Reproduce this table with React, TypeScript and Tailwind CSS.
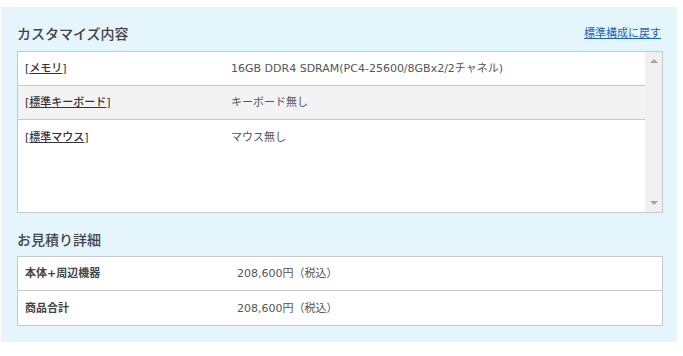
const font = {
  fontFamily: '"DejaVu Sans", "Noto Sans CJK JP", sans-serif',
};

const customItems = [
  { label: "メモリ", value: "16GB DDR4 SDRAM(PC4-25600/8GBx2/2チャネル)" },
  { label: "標準キーボード", value: "キーボード無し" },
  { label: "標準マウス", value: "マウス無し" },
];

const estimateRows = [
  { label: "本体+周辺機器", value: "208,600円（税込）" },
  { label: "商品合計", value: "208,600円（税込）" },
];

function ScrollTrack() {
  return (
    <div className="flex w-[17px] shrink-0 flex-col items-center justify-between bg-[#f0f0f0] py-[7px]">
      <span className="h-0 w-0 border-x-[4px] border-b-[4px] border-x-transparent border-b-[#a3a3a3]" />
      <span className="h-0 w-0 border-x-[4px] border-t-[4px] border-x-transparent border-t-[#a3a3a3]" />
    </div>
  );
}

export default function App() {
  return (
    <div className="h-[356px] w-[683px] bg-white pl-[1px] pt-[7px]" style={font}>
      <div className="w-[676px] bg-[#e5f5fc] pb-4 pl-4">
        {/* customize section */}
        <div className="flex h-[44px] w-[646px] items-center justify-between pt-[10px]">
          <h2 className="text-[14px] font-medium text-[#444]">カスタマイズ内容</h2>
          <a className="pr-[2px] text-[11px] text-[#1a64b4] underline" href="#">
            標準構成に戻す
          </a>
        </div>
        <div className="flex h-[162px] w-[646px] border border-[#c8c8c8] bg-white">
          <div className="flex-1">
            {customItems.map((item, idx) => (
              <div
                key={item.label}
                className={
                  "flex h-[34px] items-center pt-[2px] text-[11px] " +
                  (idx < customItems.length - 1 ? "border-b border-[#c8c8c8] " : "") +
                  (idx === 1 ? "bg-[#f3f3f3]" : "bg-white")
                }
              >
                <div className="w-[213px] pl-[7px] font-medium text-[#333]">
                  [<span className="underline">{item.label}</span>]
                </div>
                <div className="text-[#555]">{item.value}</div>
              </div>
            ))}
          </div>
          <ScrollTrack />
        </div>

        {/* estimate section */}
        <div className="flex h-[43px] items-center pt-[12px]">
          <h2 className="text-[14px] font-medium text-[#444]">お見積り詳細</h2>
        </div>
        <div className="w-[646px] border border-[#c8c8c8] bg-white">
          {estimateRows.map((row, idx) => (
            <div
              key={row.label}
              className={
                "flex h-[34px] items-center pt-[2px] text-[11px] " +
                (idx === 0 ? "border-b border-[#c8c8c8]" : "")
              }
            >
              <div className="w-[219px] pl-[7px] font-bold text-[#444]">{row.label}</div>
              <div className="text-[#555]">{row.value}</div>
            </div>
          ))}
        </div>
      </div>
    </div>
  );
}
